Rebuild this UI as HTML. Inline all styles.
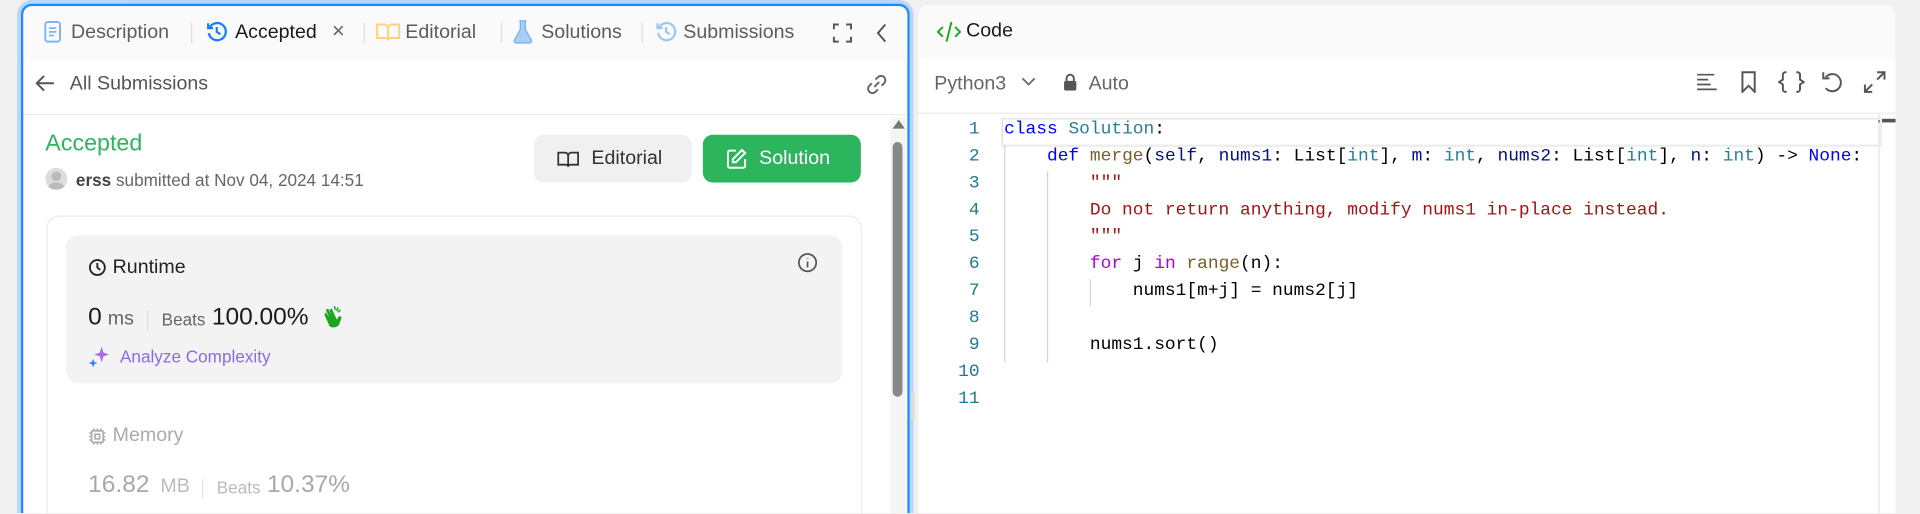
<!DOCTYPE html>
<html><head><meta charset="utf-8">
<style>
html,body{margin:0;padding:0;width:1920px;height:514px;overflow:hidden;background:#f0f0f0}
#s{position:absolute;left:0;top:0;width:1568px;height:419px;overflow:hidden;transform:scale(1.22449);transform-origin:0 0;font-family:"Liberation Sans",sans-serif;}
.a{position:absolute}
.lp{left:17px;top:3px;width:722px;height:414px;border:2px solid #1a8cff;border-bottom:none;border-radius:9px 9px 0 0;background:#fff;box-shadow:0 0 0 3px #b8d6fb;overflow:hidden}
.tabs{left:0;top:0;width:100%;height:44px;background:#fafafa}
.t{position:absolute;top:13px;font-size:16px;color:#5c5c5c;white-space:nowrap}
.sep{position:absolute;top:14px;width:1px;height:16px;background:#ddd}
.mono{font-family:"Liberation Mono",monospace;font-size:14.6px;white-space:pre}
.ln{position:absolute;width:30px;text-align:right;color:#237893}
.cl{position:absolute;left:820px}
.k{color:#0000ff}.f{color:#795e26}.v{color:#001080}.ty{color:#267f99}.s{color:#a31515}.p{color:#af00db}
.g{position:absolute;width:1px;background:#d3d3d3}
</style></head><body><div id="s">
<div class="a lp">
 <div class="a tabs">
  <svg class="a" style="left:17px;top:12px" width="14" height="18" viewBox="0 0 14 18"><rect x="1" y="1" width="12" height="16" rx="2" fill="none" stroke="#7fb3f5" stroke-width="1.6"/><path d="M4 6h6M4 9h6M4 12h4" stroke="#7fb3f5" stroke-width="1.4"/></svg>
  <span class="t" style="left:39px">Description</span><div class="sep" style="left:137px"></div>
  <svg class="a" style="left:149px;top:12px" width="18" height="18" viewBox="0 0 18 18" fill="none" stroke="#1a7ef0" stroke-width="1.8"><path d="M3 6a7 7 0 1 1-.5 4"/><path d="M2 2v4h4"/><path d="M9 5v4l3 2"/></svg>
  <span class="t" style="left:173px;color:#1a1a1a;font-weight:500">Accepted</span>
  <span class="t" style="left:252px;font-size:18px;top:10px;color:#666">×</span>
  <div class="sep" style="left:278px"></div>
  <svg class="a" style="left:288px;top:13px" width="20" height="16" viewBox="0 0 20 16" fill="none" stroke="#fcd27a" stroke-width="1.6"><path d="M1 2h6a3 3 0 0 1 3 3v10a2 2 0 0 0-2-2H1zM19 2h-6a3 3 0 0 0-3 3v10a2 2 0 0 1 2-2h7z"/></svg>
  <span class="t" style="left:312px">Editorial</span><div class="sep" style="left:390px"></div>
  <svg class="a" style="left:400px;top:11px" width="16" height="20" viewBox="0 0 16 20"><path d="M5 1h6M6 1v7L1 17a1.5 1.5 0 0 0 1.3 2h11.4A1.5 1.5 0 0 0 15 17L10 8V1" fill="#a9cff8" stroke="#7fb3f5" stroke-width="1.2"/></svg>
  <span class="t" style="left:423px">Solutions</span><div class="sep" style="left:505px"></div>
  <svg class="a" style="left:516px;top:12px" width="18" height="18" viewBox="0 0 18 18" fill="none" stroke="#9cc6f5" stroke-width="1.8"><path d="M3 6a7 7 0 1 1-.5 4"/><path d="M2 2v4h4"/><path d="M9 5v4l3 2"/></svg>
  <span class="t" style="left:539px">Submissions</span>
  <svg class="a" style="left:661px;top:14px" width="16" height="16" viewBox="0 0 16 16" fill="none" stroke="#555" stroke-width="1.6"><path d="M1 5V1h4M11 1h4v4M15 11v4h-4M5 15H1v-4"/></svg>
  <svg class="a" style="left:696px;top:14px" width="10" height="16" viewBox="0 0 10 16" fill="none" stroke="#555" stroke-width="1.6"><path d="M8 1L2 8l6 7"/></svg>
 </div>
 <svg class="a" style="left:10px;top:56px" width="16" height="14" viewBox="0 0 16 14" fill="none" stroke="#555" stroke-width="1.6"><path d="M15 7H2M7 1L1 7l6 6"/></svg>
 <span class="a" style="left:38px;top:55px;font-size:16px;color:#555">All Submissions</span>
 <svg class="a" style="left:687px;top:54px" width="20" height="20" viewBox="0 0 20 20" fill="none" stroke="#666" stroke-width="1.6"><path d="M8 12l4-4"/><path d="M9 6l2-2a3.5 3.5 0 0 1 5 5l-2 2M11 14l-2 2a3.5 3.5 0 0 1-5-5l2-2"/></svg>
 <div class="a" style="left:0;top:88px;width:100%;height:1px;background:#ebebeb"></div>
 <span class="a" style="left:18px;top:102px;font-size:19px;color:#2db55d;font-weight:500">Accepted</span>
 <div class="a" style="left:18px;top:132px;width:18px;height:18px;border-radius:50%;background:#ddd;overflow:hidden"><div class="a" style="left:5px;top:3px;width:8px;height:8px;border-radius:50%;background:#bbb"></div><div class="a" style="left:2px;top:12px;width:14px;height:6px;border-radius:7px 7px 0 0;background:#bbb"></div></div>
 <span class="a" style="left:43px;top:134px;font-size:14px;color:#666"><b style="color:#444">erss</b> submitted at Nov 04, 2024 14:51</span>
 <div class="a" style="left:417px;top:105px;width:129px;height:39px;background:#f0f0f0;border-radius:8px"></div>
 <svg class="a" style="left:436px;top:117px" width="18" height="16" viewBox="0 0 20 16" fill="none" stroke="#333" stroke-width="1.6"><path d="M1 2h6a3 3 0 0 1 3 3v10a2 2 0 0 0-2-2H1zM19 2h-6a3 3 0 0 0-3 3v10a2 2 0 0 1 2-2h7z"/></svg>
 <span class="a" style="left:464px;top:116px;font-size:16px;color:#333">Editorial</span>
 <div class="a" style="left:555px;top:105px;width:129px;height:39px;background:#2cb55d;border-radius:8px"></div>
 <svg class="a" style="left:574px;top:116px" width="17" height="17" viewBox="0 0 17 17" fill="none" stroke="#fff" stroke-width="1.6"><path d="M8 2H3a1.5 1.5 0 0 0-1.5 1.5v11A1.5 1.5 0 0 0 3 16h11a1.5 1.5 0 0 0 1.5-1.5V9"/><path d="M13 1.5l2.5 2.5L8 11.5H5.5V9z"/></svg>
 <span class="a" style="left:601px;top:116px;font-size:16px;color:#fff;font-weight:500">Solution</span>
 <div class="a" style="left:708px;top:91px;width:13px;height:323px;background:#f5f5f5"></div>
 <div class="a" style="left:710px;top:93px;width:0;height:0;border-left:5px solid transparent;border-right:5px solid transparent;border-bottom:7px solid #777"></div>
 <div class="a" style="left:710px;top:111px;width:8px;height:208px;background:#888;border-radius:4px"></div>
 <div class="a" style="left:19px;top:171px;width:664px;height:243px;border:1px solid #ebebeb;border-bottom:none;border-radius:10px 10px 0 0"></div>
 <div class="a" style="left:35px;top:187px;width:634px;height:121px;background:#f3f3f3;border-radius:10px"></div>
 <svg class="a" style="left:53px;top:206px" width="15" height="15" viewBox="0 0 16 16" fill="none" stroke="#222" stroke-width="1.6"><circle cx="8" cy="8" r="6.5"/><path d="M8 4v4l2.5 2"/></svg>
 <span class="a" style="left:73px;top:205px;font-size:16px;color:#222">Runtime</span>
 <svg class="a" style="left:632px;top:201px" width="17" height="17" viewBox="0 0 18 18" fill="none" stroke="#555" stroke-width="1.5"><circle cx="9" cy="9" r="7.5"/><path d="M9 8v5M9 5v.5"/></svg>
 <span class="a" style="left:53px;top:243px;font-size:20px;color:#1a1a1a">0</span>
 <span class="a" style="left:69px;top:247px;font-size:16px;color:#666">ms</span>
 <div class="a" style="left:101px;top:249px;width:1px;height:16px;background:#ddd"></div>
 <span class="a" style="left:113px;top:248px;font-size:14px;color:#666">Beats</span>
 <span class="a" style="left:154px;top:243px;font-size:20px;color:#1a1a1a">100.00%</span>
 <svg class="a" style="left:243px;top:244px" width="18" height="20" viewBox="0 0 18 20"><path d="M3 8l4 9c1 2 6 2 8-1l2-6-2-1-2 3-4-9-2 1 2 5-3-6-2 1 3 6-3-4z" fill="#1ca51c"/><path d="M11 1l1 3M14 2l-1 3M16 4l-2 2" stroke="#1ca51c" stroke-width="1.2"/></svg>
 <svg class="a" style="left:53px;top:277px" width="18" height="18" viewBox="0 0 18 18"><path d="M11 1l1.5 5 4.5 1.5-4.5 1.5L11 14l-1.5-5L5 7.5 9.5 6z" fill="#a96cf0"/><path d="M4 11l1 2.5 2.5 1-2.5 1L4 18l-1-2.5-2.5-1 2.5-1z" fill="#3a7ef5"/></svg>
 <span class="a" style="left:79px;top:278px;font-size:14px;color:#8a6ae8">Analyze Complexity</span>
 <svg class="a" style="left:53px;top:344px" width="15" height="15" viewBox="0 0 16 16" fill="none" stroke="#aaa" stroke-width="1.4"><rect x="3" y="3" width="10" height="10" rx="1"/><rect x="6" y="6" width="4" height="4"/><path d="M5 1v2M8 1v2M11 1v2M5 13v2M8 13v2M11 13v2M1 5h2M1 8h2M1 11h2M13 5h2M13 8h2M13 11h2"/></svg>
 <span class="a" style="left:73px;top:342px;font-size:16px;color:#aaa">Memory</span>
 <span class="a" style="left:53px;top:380px;font-size:20px;color:#a8a8a8">16.82</span>
 <span class="a" style="left:112px;top:384px;font-size:16px;color:#bbb">MB</span>
 <div class="a" style="left:146px;top:386px;width:1px;height:16px;background:#e5e5e5"></div>
 <span class="a" style="left:158px;top:385px;font-size:14px;color:#bbb">Beats</span>
 <span class="a" style="left:199px;top:380px;font-size:20px;color:#a8a8a8">10.37%</span>
</div>
<div class="a" style="left:744px;top:320px;width:3px;height:24px;background:#ddd;border-radius:2px"></div>
<div class="a" style="left:750px;top:4px;width:798px;height:415px;background:#fff;border-radius:8px 8px 0 0;overflow:hidden">
 <div class="a" style="left:0;top:0;width:100%;height:44px;background:#fafafa"></div>
</div>
<svg class="a" style="left:765px;top:17px" width="20" height="18" viewBox="0 0 20 18" fill="none" stroke="#1fa91f" stroke-width="1.6"><path d="M5 5L1 9l4 4M15 5l4 4-4 4M12 1L8 17"/></svg>
<span class="a" style="left:789px;top:17px;font-size:16px;color:#1a1a1a">Code</span>
<span class="a" style="left:763px;top:60px;font-size:16px;color:#666">Python3</span>
<svg class="a" style="left:834px;top:62px" width="12" height="10" viewBox="0 0 12 10" fill="none" stroke="#666" stroke-width="1.4"><path d="M1 2l5 5 5-5"/></svg>
<svg class="a" style="left:868px;top:60px" width="12" height="14" viewBox="0 0 12 14"><path d="M3 6V4a3 3 0 0 1 6 0v2" fill="none" stroke="#555" stroke-width="1.6"/><rect x="1" y="6" width="10" height="8" rx="1.5" fill="#555"/></svg>
<span class="a" style="left:889px;top:60px;font-size:16px;color:#666">Auto</span>
<svg class="a" style="left:1385px;top:59px" width="18" height="16" viewBox="0 0 18 16" fill="none" stroke="#555" stroke-width="1.4"><path d="M1 2h14M1 6h9M1 10h11M1 14h16"/></svg>
<svg class="a" style="left:1421px;top:58px" width="14" height="18" viewBox="0 0 14 18" fill="none" stroke="#555" stroke-width="1.6"><path d="M2 1h10v16l-5-5-5 5z"/></svg>
<svg class="a" style="left:1452px;top:58px" width="22" height="18" viewBox="0 0 22 18" fill="none" stroke="#555" stroke-width="1.6"><path d="M7 1H6a2 2 0 0 0-2 2v4L1 9l3 2v4a2 2 0 0 0 2 2h1M15 1h1a2 2 0 0 1 2 2v4l3 2-3 2v4a2 2 0 0 1-2 2h-1"/></svg>
<svg class="a" style="left:1487px;top:58px" width="18" height="18" viewBox="0 0 18 18" fill="none" stroke="#555" stroke-width="1.6"><path d="M4 5a7 7 0 1 1 0 9"/><path d="M2 1v5h5"/></svg>
<svg class="a" style="left:1522px;top:58px" width="18" height="18" viewBox="0 0 18 18" fill="none" stroke="#555" stroke-width="1.6"><path d="M11 1h6v6M17 1l-6 6M7 17H1v-6M1 17l6-6"/></svg>
<div class="a" style="left:750px;top:92px;width:798px;height:1px;background:#ebebeb"></div>
<div class="a" style="left:1534px;top:93px;width:1px;height:326px;background:#e5e5e5"></div>
<div class="a" style="left:1534px;top:97px;width:14px;height:3px;background:#555"></div>
<div class="a" style="left:1548px;top:0;width:20px;height:419px;background:#f0f0f0"></div>
<div class="a" style="left:818px;top:96px;width:716px;height:20px;border:2px solid #eee;border-left:1px solid #ddd"></div>
<div class="g" style="left:820px;top:118px;height:178px"></div>
<div class="g" style="left:855px;top:140px;height:156px"></div>
<div class="g" style="left:890px;top:228px;height:22px"></div>
<div class="mono">
<span class="ln" style="left:770px;top:98px">1</span><span class="ln" style="left:770px;top:120px">2</span><span class="ln" style="left:770px;top:142px">3</span><span class="ln" style="left:770px;top:164px">4</span><span class="ln" style="left:770px;top:186px">5</span><span class="ln" style="left:770px;top:208px">6</span><span class="ln" style="left:770px;top:230px">7</span><span class="ln" style="left:770px;top:252px">8</span><span class="ln" style="left:770px;top:274px">9</span><span class="ln" style="left:770px;top:296px">10</span><span class="ln" style="left:770px;top:318px">11</span>
<span class="cl" style="top:98px"><span class="k">class</span> <span class="ty">Solution</span>:</span>
<span class="cl" style="top:120px">    <span class="k">def</span> <span class="f">merge</span>(<span class="v">self</span>, <span class="v">nums1</span>: List[<span class="ty">int</span>], <span class="v">m</span>: <span class="ty">int</span>, <span class="v">nums2</span>: List[<span class="ty">int</span>], <span class="v">n</span>: <span class="ty">int</span>) -&gt; <span class="k">None</span>:</span>
<span class="cl s" style="top:142px">        """</span>
<span class="cl s" style="top:164px">        Do not return anything, modify nums1 in-place instead.</span>
<span class="cl s" style="top:186px">        """</span>
<span class="cl" style="top:208px">        <span class="p">for</span> j <span class="p">in</span> <span class="f">range</span>(n):</span>
<span class="cl" style="top:230px">            nums1[m+j] = nums2[j]</span>
<span class="cl" style="top:274px">        nums1.sort()</span>
</div>
</div></body></html>
